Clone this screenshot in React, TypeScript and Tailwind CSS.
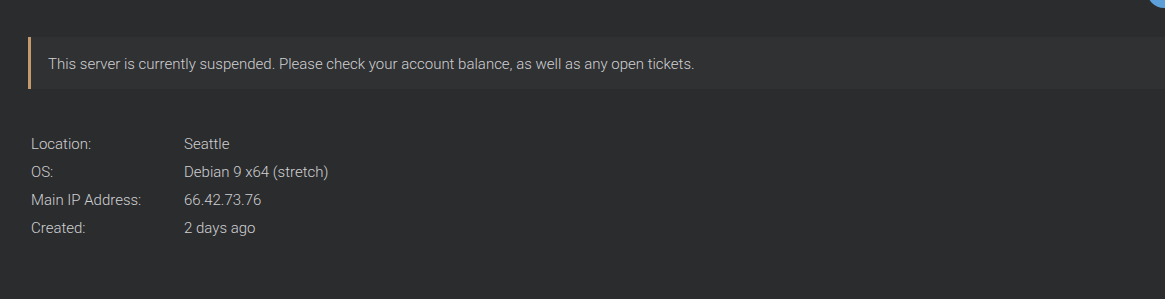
import React from "react";

const details = [
  { label: "Location:", value: "Seattle" },
  { label: "OS:", value: "Debian 9 x64 (stretch)" },
  { label: "Main IP Address:", value: "66.42.73.76" },
  { label: "Created:", value: "2 days ago" },
];

const App = () => {
  return (
    <div
      className="relative h-[299px] w-[1165px] overflow-hidden bg-[#2b2c2e] text-[15px] text-[#cfd0d2]"
      style={{ fontFamily: "Roboto, 'Liberation Sans', sans-serif" }}
    >
      {/* blue avatar corner */}
      <div className="absolute -right-[16px] -top-[26px] h-[34px] w-[34px] rounded-full bg-[#5d9fd8]" />

      <div className="pl-[28px] pt-[37px]">
        <div className="flex h-[52px] items-center border-l-[3px] border-[#c39a6b] bg-[#303133] pl-[17px] pt-[2px] font-light">
          This server is currently suspended. Please check your account balance, as well as any open tickets.
        </div>

        <div className="mt-[41px] flex flex-col pl-[3px] font-light">
          {details.map((row) => (
            <div key={row.label} className="flex h-[28px] items-center">
              <span className="w-[153px]">{row.label}</span>
              <span>{row.value}</span>
            </div>
          ))}
        </div>
      </div>
    </div>
  );
};

export default App;
